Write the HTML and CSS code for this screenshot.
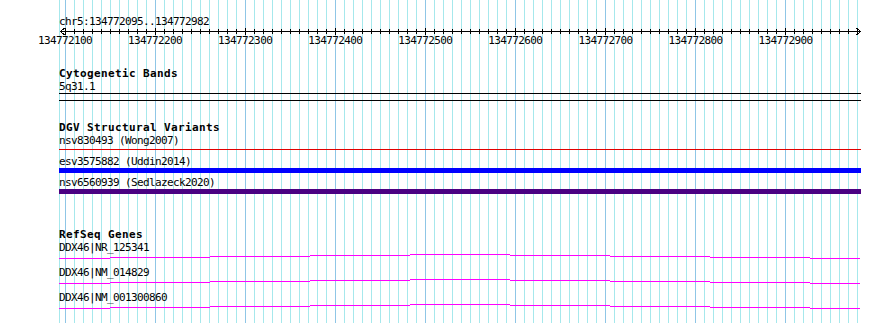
FILE: index.html
```html
<!DOCTYPE html>
<html lang="en">
<head>
  <meta charset="UTF-8" />
  <title>chr5:134772095..134772982</title>
  <link rel="stylesheet" href="styles.css">
</head>
<body>
  <div class="browser">
    <svg class="grid" id="grid" width="890" height="323"></svg>

    <div class="ruler">
      <div class="seg-name">chr5:134772095..134772982</div>
      <svg class="axis" width="890" height="6" id="axis">
        <line class="axis-line" x1="60" y1="3.5" x2="861" y2="3.5" />
        <polyline class="axis-line" points="64.5,0 60.5,3.5 64.5,7" />
        <polyline class="axis-line" points="856.5,0 860.5,3.5 856.5,7" />
      </svg>
      <div class="tick-labels">
        <span>134772100</span>
        <span>134772200</span>
        <span>134772300</span>
        <span>134772400</span>
        <span>134772500</span>
        <span>134772600</span>
        <span>134772700</span>
        <span>134772800</span>
        <span>134772900</span>
      </div>
    </div>

    <!-- cytobands -->
    <div class="track">
      <div class="track-title">Cytogenetic Bands</div>
      <div class="feature">
        <div class="feature-label">5q31.1</div>
        <div class="band"></div>
      </div>
    </div>

    <!-- DGV -->
    <div class="track">
      <div class="track-title">DGV Structural Variants</div>
      <div class="feature">
        <div class="feature-label">nsv830493 (Wong2007)</div>
        <div class="sv sv-line"></div>
      </div>
      <div class="feature">
        <div class="feature-label">esv3575882 (Uddin2014)</div>
        <div class="sv sv-gain"></div>
      </div>
      <div class="feature">
        <div class="feature-label">nsv6560939 (Sedlazeck2020)</div>
        <div class="sv sv-complex"></div>
      </div>
    </div>

    <!-- RefSeq -->
    <div class="track track-genes">
      <div class="track-title">RefSeq Genes</div>
      <div class="feature gene">
        <div class="feature-label">DDX46|NR_125341</div>
        <svg class="intron" width="802" height="10"><path d="M0 4.5H51M51 3.5H151M151 2.5H251M251 1.5H351M351 0.5H451M451 1.5H551M551 2.5H651M651 3.5H751M751 4.5H801" /></svg>
      </div>
      <div class="feature gene">
        <div class="feature-label">DDX46|NM_014829</div>
        <svg class="intron" width="802" height="10"><path d="M0 4.5H51M51 3.5H151M151 2.5H251M251 1.5H351M351 0.5H451M451 1.5H551M551 2.5H651M651 3.5H751M751 4.5H801" /></svg>
      </div>
      <div class="feature gene">
        <div class="feature-label">DDX46|NM_001300860</div>
        <svg class="intron" width="802" height="10"><path d="M0 4.5H51M51 3.5H151M151 2.5H251M251 1.5H351M351 0.5H451M451 1.5H551M551 2.5H651M651 3.5H751M751 4.5H801" /></svg>
      </div>
    </div>
  </div>

  <script>
    const segStart = 134772095;
    const segEnd = 134772982;
    const scale = 800 / (segEnd - segStart + 1);
    const NS = "http://www.w3.org/2000/svg";
    const grid = document.getElementById("grid");
    const axis = document.getElementById("axis");

    function toPx(bp) {
      return Math.round(60 + (bp - segStart) * scale);
    }

    function addLine(parent, x, y1, y2, cls) {
      const l = document.createElementNS(NS, "line");
      l.setAttribute("x1", x);
      l.setAttribute("x2", x);
      l.setAttribute("y1", y1);
      l.setAttribute("y2", y2);
      if (cls) l.setAttribute("class", cls);
      parent.appendChild(l);
    }

    // panel edge
    addLine(grid, 59.5, 0, 323, "minor");

    for (let bp = 134772100; bp <= segEnd; bp += 10) {
      const x = toPx(bp) + 0.5;
      const major = bp % 100 === 0;
      addLine(grid, x, 0, 323, major ? "major" : "minor");
      addLine(axis, x, major ? 0 : 1, major ? 7 : 6, "tick");
    }
  </script>
</body>
</html>
```

FILE: styles.css
```css
body {
  margin: 0;
  background: #fff;
  font-family: "DejaVu Sans Mono", "Liberation Mono", monospace;
  font-size: 11px;
  line-height: 13px;
  color: #000;
}

.browser {
  position: relative;
  width: 890px;
  height: 323px;
  overflow: hidden;
}

.grid {
  position: absolute;
  top: 0;
  left: 0;
  z-index: 0;
  shape-rendering: crispEdges;
}

.grid .minor {
  stroke: #a6e8ec;
  stroke-width: 1;
}

.grid .major {
  stroke: #8fc6e6;
  stroke-width: 1;
}

.ruler,
.track {
  position: relative;
  z-index: 1;
}

.ruler {
  padding-top: 15px;
}

.seg-name {
  padding-left: 59px;
  height: 13px;
  letter-spacing: -0.62px;
}

.axis {
  display: block;
  overflow: visible;
  shape-rendering: crispEdges;
}

.axis-line,
.axis .tick {
  stroke: #000;
  stroke-width: 1;
  fill: none;
}

.tick-labels {
  display: flex;
  padding-left: 19.95px;
  height: 13px;
  letter-spacing: -0.62px;
}

.tick-labels span {
  width: 90.09px;
  flex: none;
  text-align: center;
}

.track {
  margin-top: 20px;
}

.track-genes {
  margin-top: 34px;
}

.track-title {
  padding-left: 59px;
  height: 13px;
  font-weight: bold;
  letter-spacing: 0.38px;
}

.feature {
  padding-left: 59px;
}

.feature-label {
  height: 13px;
  letter-spacing: -0.62px;
  white-space: nowrap;
}

.band {
  width: 802px;
  height: 6px;
  border-top: 1px solid #000;
  border-bottom: 1px solid #000;
}

.sv {
  width: 802px;
  height: 5px;
  margin-bottom: 3px;
}

.sv-line {
  background: linear-gradient(#e00000, #e00000) 0 2px / 100% 1px no-repeat;
}

.sv-gain {
  background: #0000ff;
}

.sv-complex {
  background: #4b0082;
}

.gene {
  height: 25px;
}

.intron {
  display: block;
  shape-rendering: crispEdges;
}

.intron path {
  stroke: #ff00ff;
  stroke-width: 1;
  fill: none;
}
```
